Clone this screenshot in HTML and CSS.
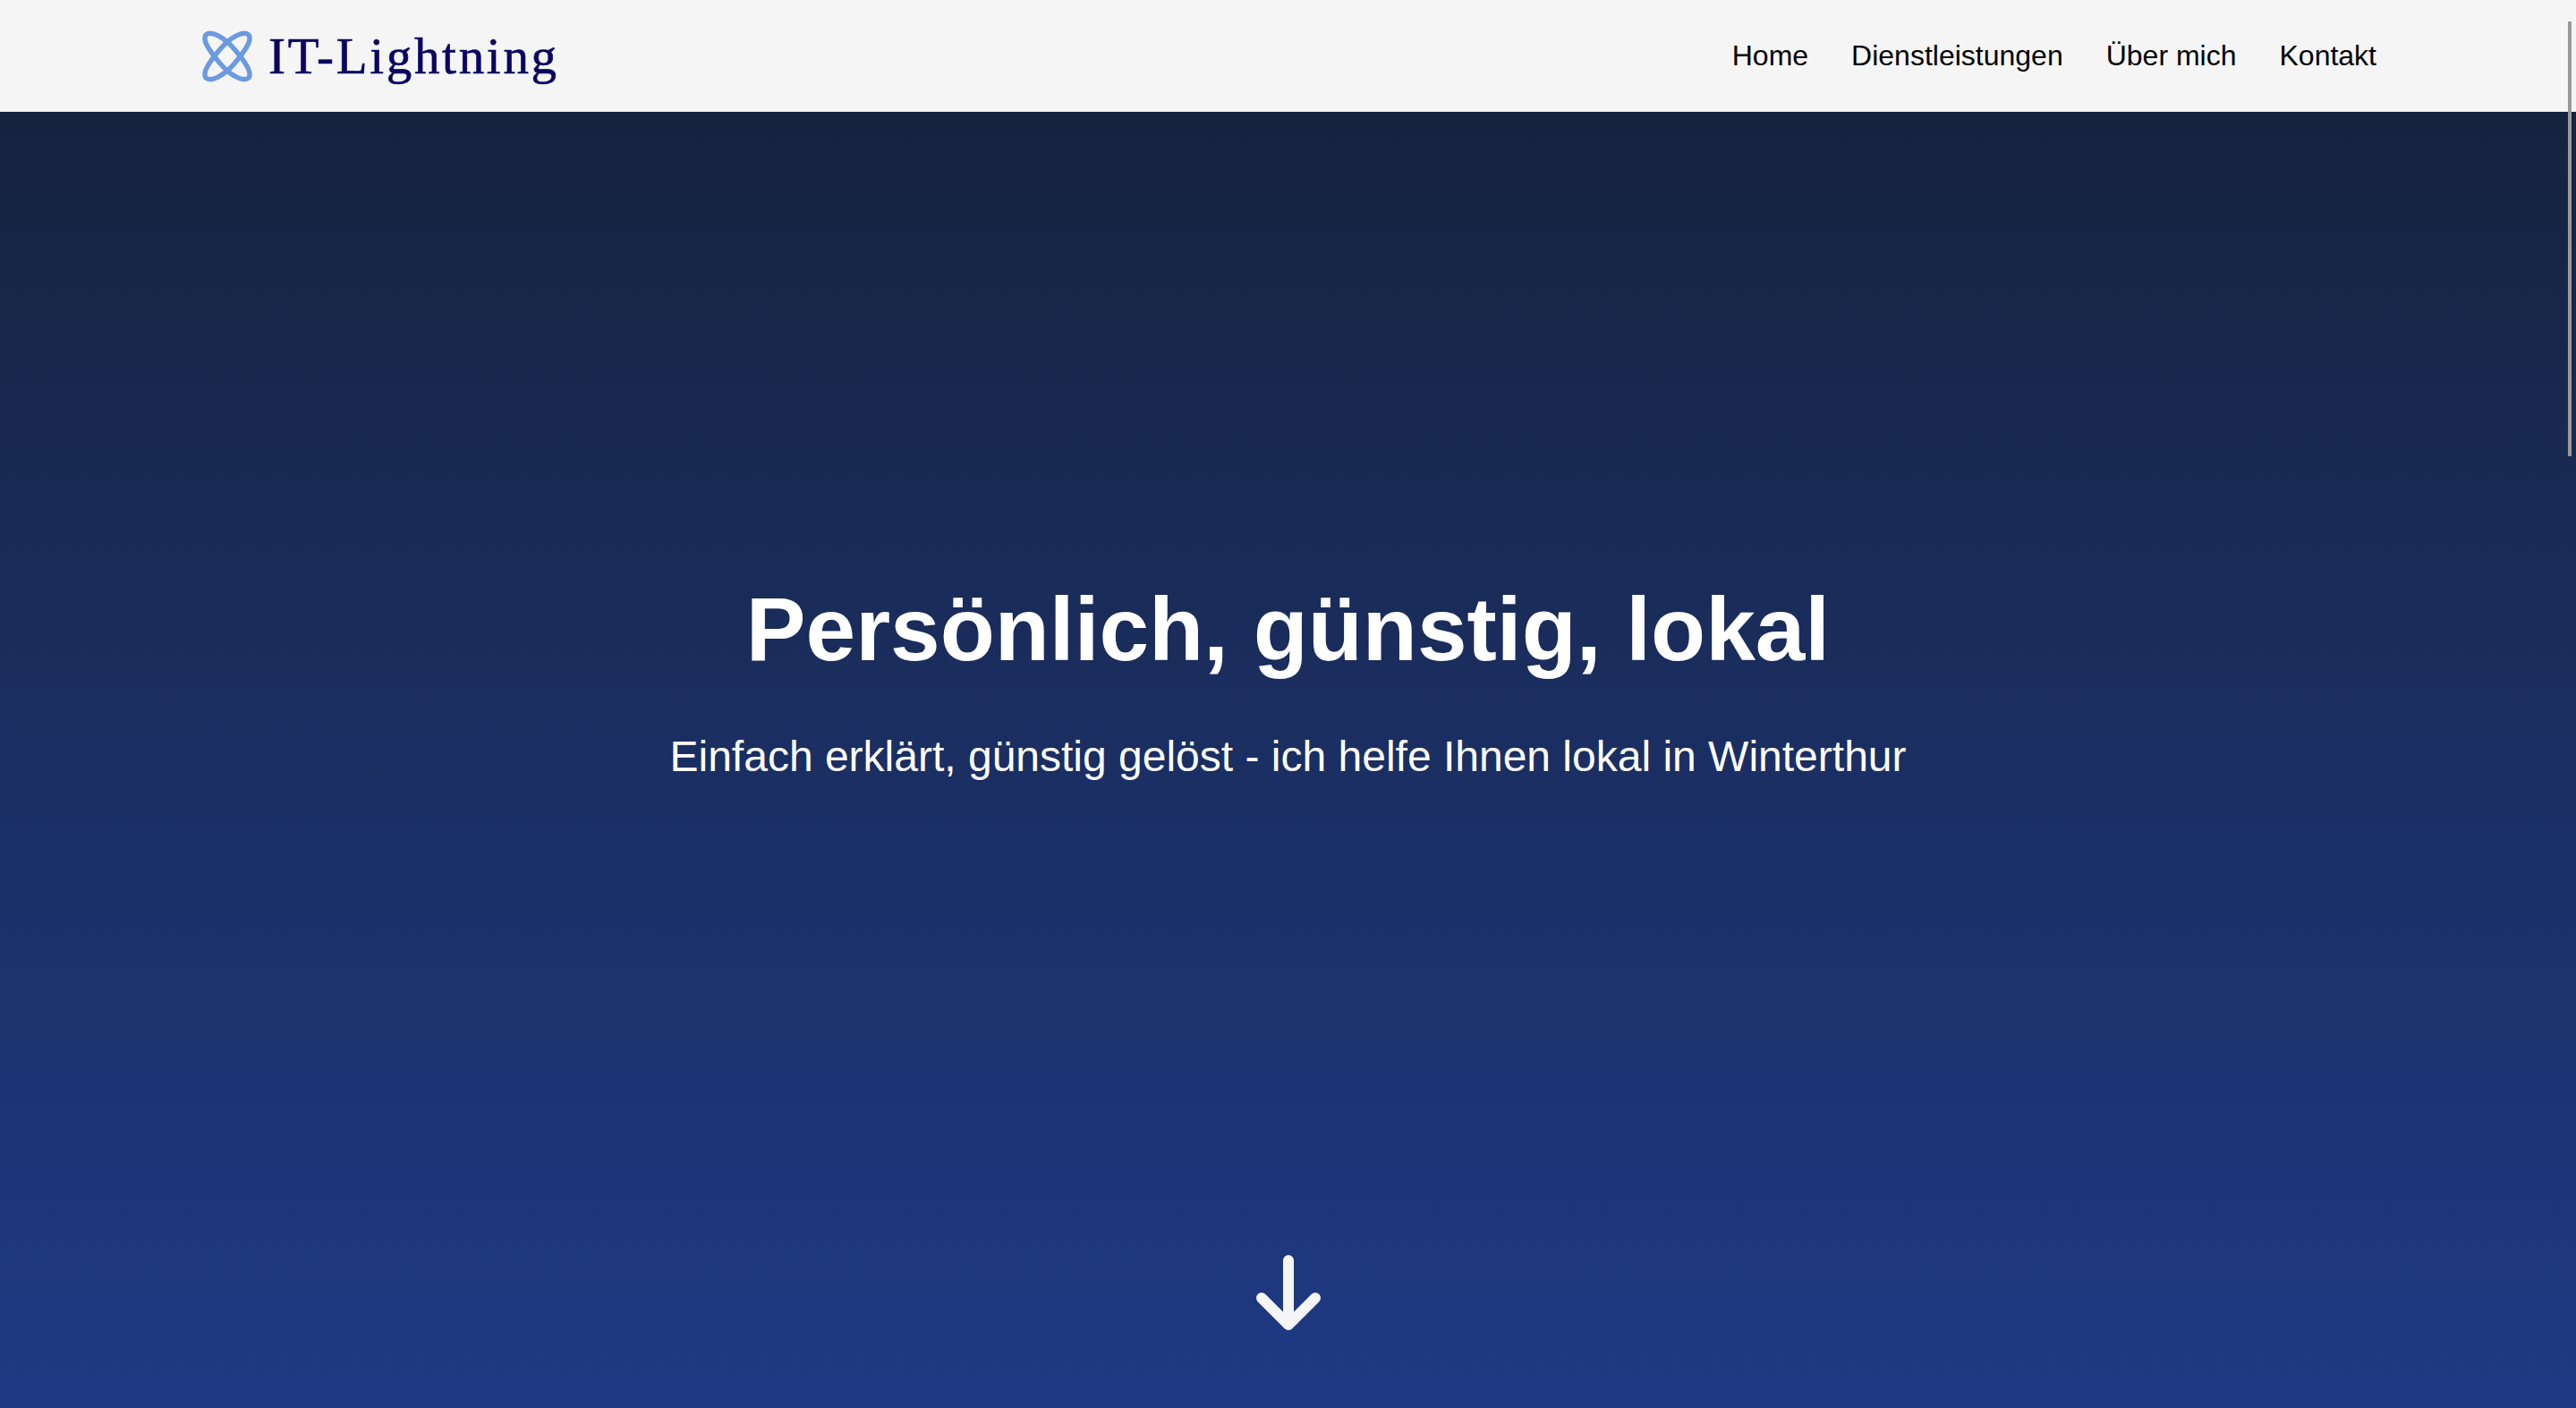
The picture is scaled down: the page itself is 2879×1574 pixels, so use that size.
FILE: index.html
```html
<html>
<head>
  <title>IT-Lightning</title>
  <link rel="stylesheet" href="styles.css">
</head>
<body>
  <div class="header">
    <a class="logo" href="#">
      <svg class="logo-icon" width="58" height="60" viewBox="0 0 58 60">
        <path d="M5 6C11 1 25 8 37 22C49 36 57 48 53 54C47 59 33 52 21 38C9 24 1 12 5 6Z" />
        <path d="M53 6C47 1 33 8 21 22C9 36 1 48 5 54C11 59 25 52 37 38C49 24 57 12 53 6Z" />
      </svg>
      <span class="logo-text">IT-Lightning</span>
    </a>
    <div class="nav">
      <a href="#">Home</a>
      <a href="#">Dienstleistungen</a>
      <a href="#">Über mich</a>
      <a href="#">Kontakt</a>
    </div>
  </div>
  <div class="hero">
    <h1>Persönlich, günstig, lokal</h1>
    <p>Einfach erklärt, günstig gelöst - ich helfe Ihnen lokal in Winterthur</p>
    <svg class="arrow" width="72" height="90" viewBox="0 0 72 90">
      <path d="M36 6V78M6 48L36 78L66 48" />
    </svg>
  </div>
  <div class="scrollbar"></div>
</body>
</html>
```

FILE: styles.css
```css
html,
body {
  height: 100%;
  margin: 0;
  overflow: hidden;
}

body {
  display: flex;
  flex-direction: column;
  font-family: "Liberation Sans", Arial, sans-serif;
  background-color: #f5f5f5;
}

a {
  color: inherit;
  text-decoration: none;
}

.header {
  height: 125px;
  flex: none;
  display: flex;
  align-items: center;
  justify-content: space-between;
  padding: 0 223px 0 225px;
  background-color: #f5f5f5;
}

.logo {
  display: flex;
  align-items: center;
  gap: 17px;
}

.logo-icon path {
  fill: none;
  stroke: #6b9ae0;
  stroke-width: 5.5;
  stroke-linejoin: round;
}

.logo-text {
  font-family: "Liberation Serif", serif;
  font-size: 57px;
  line-height: 1;
  letter-spacing: 2.7px;
  -webkit-text-stroke: 0.6px #0b0560;
  color: #0b0560;
}

.nav {
  display: flex;
  gap: 48px;
  font-size: 32px;
  color: #000;
}

.hero {
  flex: 1;
  display: flex;
  flex-direction: column;
  align-items: center;
  padding-top: 521px;
  padding-bottom: 81px;
  color: #fff;
  background: linear-gradient(to bottom, #16233f, #1f3a85);
}

.hero h1 {
  margin: 0;
  font-size: 100px;
  line-height: 1.15;
  font-weight: bold;
}

.hero p {
  margin: 57px 0 0 0;
  font-size: 48px;
  line-height: 1.15;
}

.arrow {
  margin-top: auto;
}

.arrow path {
  fill: none;
  stroke: #f5f5f5;
  stroke-width: 12;
  stroke-linecap: round;
  stroke-linejoin: round;
}

.scrollbar {
  position: absolute;
  top: 24px;
  right: 5px;
  width: 4px;
  height: 486px;
  background-color: #999;
}
```
